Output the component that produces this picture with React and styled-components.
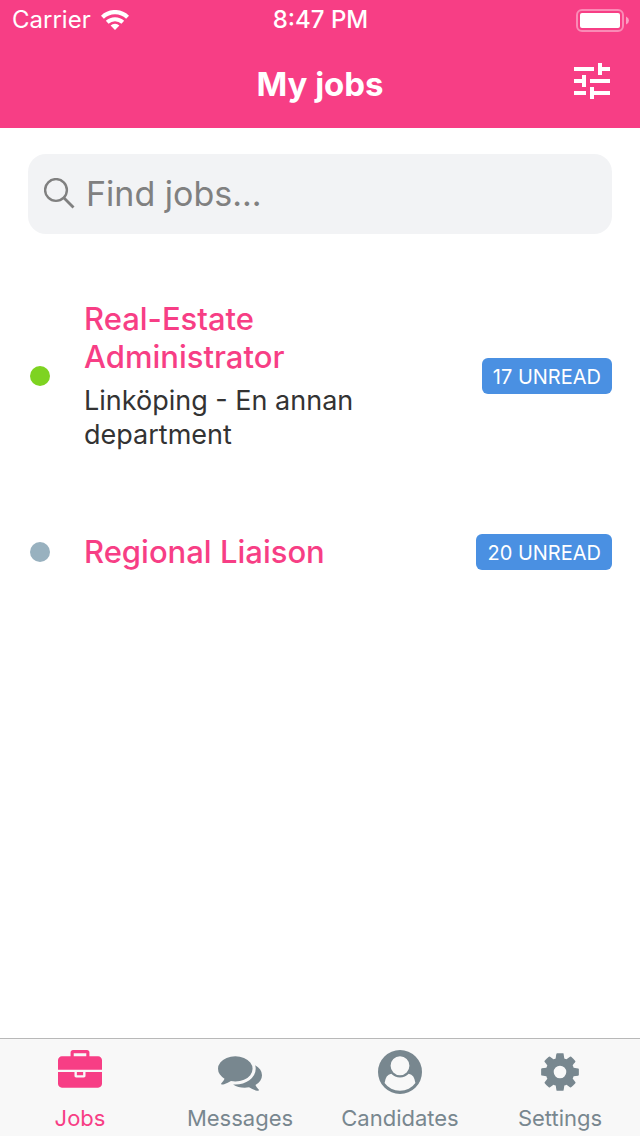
import React from 'react';
import styled, { createGlobalStyle } from 'styled-components';
import { MdTune } from 'react-icons/md';

const pink = '#f73e85';
const slate = '#78878f';

const GlobalStyle = createGlobalStyle`
  * { box-sizing: border-box; }
  body {
    margin: 0;
    background: #fff;
    font-family: Inter, "Liberation Sans", sans-serif;
  }
`;

const Screen = styled.div`
  display: flex;
  flex-direction: column;
  min-height: 100vh;
`;

const Header = styled.header`
  background: ${pink};
  color: #fff;
`;

const StatusBar = styled.div`
  display: grid;
  grid-template-columns: 1fr auto 1fr;
  align-items: center;
  height: 40px;
  padding: 0 11px 0 12px;
  font-size: 24px;
  line-height: 28px;
`;

const Carrier = styled.div`
  display: flex;
  align-items: center;
  gap: 10px;
`;

const Clock = styled.time`
  font-weight: 500;
`;

const Battery = styled.svg`
  justify-self: end;
`;

const NavBar = styled.div`
  display: grid;
  grid-template-columns: 1fr auto 1fr;
  align-items: center;
  height: 88px;
  padding: 0 24px;
`;

const Title = styled.h1`
  grid-column: 2;
  margin: 0;
  font-size: 33px;
  line-height: 40px;
  font-weight: 700;
`;

const FilterButton = styled.button`
  display: flex;
  justify-self: end;
  margin: 0 0 6px;
  padding: 0;
  border: 0;
  background: none;
  color: inherit;
  font-size: 48px;
`;

const Content = styled.main`
  flex: 1;
  padding: 26px 28px;
`;

const SearchField = styled.label`
  display: flex;
  align-items: center;
  gap: 11px;
  height: 80px;
  padding: 0 16px;
  border-radius: 18px;
  background: #f2f3f5;
  color: #808080;
`;

const SearchInput = styled.input`
  flex: 1;
  min-width: 0;
  padding: 0;
  border: 0;
  outline: 0;
  background: none;
  color: #333;
  font-family: inherit;
  font-size: 34px;
  line-height: 44px;

  &::placeholder {
    color: #808080;
    opacity: 1;
  }
`;

const JobList = styled.ul`
  display: flex;
  flex-direction: column;
  gap: 1px;
  margin: 26px 0 0;
  padding: 0;
  list-style: none;
`;

const JobRow = styled.li`
  display: flex;
  align-items: center;
  padding: 40px 0;
`;

const StatusDot = styled.span`
  flex: none;
  width: 20px;
  height: 20px;
  margin: 0 34px 0 2px;
  border-radius: 50%;
  background: ${(p) => (p.$active ? '#7ed321' : '#98b1bf')};
`;

const JobText = styled.div`
  flex: 1;
  max-width: 300px;
`;

const JobTitle = styled.a`
  display: block;
  color: ${pink};
  font-size: 31px;
  line-height: 38px;
  font-weight: 500;
  text-decoration: none;
`;

const JobPlace = styled.p`
  margin: 8px 0 0;
  color: #333;
  font-size: 27px;
  line-height: 34px;
`;

const Badge = styled.span`
  margin-left: auto;
  padding: 1px 11px 0;
  height: 36px;
  border-radius: 6px;
  background: #4a90e2;
  color: #fff;
  font-size: 20px;
  line-height: 36px;
  white-space: nowrap;
`;

const TabBar = styled.nav`
  position: sticky;
  bottom: 0;
  display: grid;
  grid-template-columns: repeat(4, 1fr);
  height: 98px;
  border-top: 1px solid #b8b8b8;
  background: #f8f8f8;
`;

const Tab = styled.a`
  display: flex;
  flex-direction: column;
  align-items: center;
  gap: 10px;
  padding-top: 11px;
  color: ${(p) => (p.$active ? pink : slate)};
  font-size: 22px;
  line-height: 28px;
  text-decoration: none;
`;

const icons = {
  briefcase:
    'M640 256h512v-128h-512v128zm1152 640v480q0 66-47 113t-113 47h-1472q-66 0-113-47t-47-113v-480h672v160q0 26 19 45t45 19h320q26 0 45-19t19-45v-160h672zm-768 0v128h-256v-128h256zm768-480v384h-1792v-384q0-66 47-113t113-47h352v-160q0-40 28-68t68-28h576q40 0 68 28t28 68v160h352q66 0 113 47t47 113z',
  comments:
    'M1408 768q0 139-94 257t-256.5 186.5-353.5 68.5q-86 0-176-16-124 88-278 128-36 9-86 16h-3q-11 0-20.5-8t-11.5-21q-1-3-1-6.5t.5-6.5 2-6l2.5-5 3.5-5.5 4-5 4.5-5 4-4.5q5-6 23-25t26-29.5 22.5-29 25-38.5 20.5-44q-124-72-195-177t-71-224q0-139 94-257t256.5-186.5 353.5-68.5 353.5 68.5 256.5 186.5 94 257zm384 256q0 120-71 224.5t-195 176.5q10 24 20.5 44t25 38.5 22.5 29 26 29.5 23 25q1 1 4 4.5t4.5 5 4 5 3.5 5.5l2.5 5 2 6 .5 6.5-1 6.5q-3 14-13 22t-22 7q-50-7-86-16-154-40-278-128-90 16-176 16-271 0-472-132 58 4 88 4 161 0 309-45t264-129q125-92 192-212t67-254q0-77-23-152 129 71 204 178t75 230z',
  user:
    'M1523 1339q-22-155-87.5-257.5t-184.5-118.5q-67 74-159.5 115.5t-195.5 41.5-195.5-41.5-159.5-115.5q-119 16-184.5 118.5t-87.5 257.5q106 150 271 237.5t356 87.5 356-87.5 271-237.5zM1280 640a384 384 0 1 0-768 0a384 384 0 1 0 768 0zM1792 896a896 896 0 1 1-1792 0a896 896 0 1 1 1792 0z',
  cog:
    'M1152 896q0-106-75-181t-181-75-181 75-75 181 75 181 181 75 181-75 75-181zm512-109v222q0 12-8 23t-20 13l-185 28q-19 54-39 91 35 50 107 138 10 12 10 25t-9 23q-27 37-99 108t-94 71q-12 0-26-9l-138-108q-44 23-91 38-16 136-29 186-7 28-36 28h-222q-14 0-24.5-8.5t-11.5-21.5l-28-184q-49-16-90-37l-141 107q-10 9-25 9-14 0-25-11-126-114-165-168-7-10-7-23 0-12 8-23 15-21 51-66.5t54-70.5q-27-50-41-99l-183-27q-13-2-21-12.5t-8-23.5v-222q0-12 8-23t19-13l186-28q14-46 39-92-40-57-107-138-10-12-10-24 0-10 9-23 26-36 98.5-107.5t94.5-71.5q13 0 26 10l138 107q44-23 91-38 16-136 29-186 7-28 36-28h222q14 0 24.5 8.5t11.5 21.5l28 184q49 16 90 37l142-107q9-9 24-9 13 0 25 10 129 119 165 170 7 8 7 22 0 12-8 23-15 21-51 66.5t-54 70.5q26 50 41 98l183 28q13 2 21 12.5t8 23.5z',
};

const TabIcon = ({ name }) => (
  <svg width="44" height="44" viewBox="0 0 1792 1792" fill="currentColor" fillRule="evenodd" aria-hidden="true">
    <path d={icons[name]} />
  </svg>
);

const WifiIcon = () => (
  <svg width="28" height="20" viewBox="0 0 28 20" fill="none" stroke="#fff" aria-hidden="true">
    <path d="M1.4 7.2a18 18 0 0 1 25.2 0" strokeWidth="4.2" />
    <path d="M6.200 12.300a11.400 11.400 0 0 1 15.600 0" strokeWidth="4" />
    <path d="M14 20l-4.400-4.400a6.200 6.200 0 0 1 8.800 0z" fill="#fff" stroke="none" />
  </svg>
);

const BatteryIcon = () => (
  <Battery width="53" height="24" viewBox="0 0 53 24" aria-label="Battery full" role="img">
    <rect x="1" y="2" width="46" height="21" rx="5" fill="none" stroke="#fff" strokeOpacity=".4" strokeWidth="2" />
    <rect x="4" y="5" width="40" height="15" rx="2" fill="#fff" />
    <path d="M50 8.500q3 1.500 3 4t-3 4z" fill="#fff" fillOpacity=".5" />
  </Battery>
);

const SearchIcon = () => (
  <svg width="31" height="32" viewBox="0 0 31 32" fill="none" stroke="currentColor" strokeWidth="2.4" aria-hidden="true">
    <circle cx="12" cy="12" r="10.900" />
    <path d="M19.800 19.800L29.500 29.500" strokeWidth="2.800" />
  </svg>
);

const jobs = [
  { title: 'Real-Estate Administrator', place: 'Linköping - En annan department', unread: 17, active: true },
  { title: 'Regional Liaison', unread: 20, active: false },
];

const tabs = [
  { label: 'Jobs', icon: 'briefcase', active: true },
  { label: 'Messages', icon: 'comments' },
  { label: 'Candidates', icon: 'user' },
  { label: 'Settings', icon: 'cog' },
];

export default function App() {
  return (
    <Screen>
      <GlobalStyle />
      <Header>
        <StatusBar>
          <Carrier>
            Carrier
            <WifiIcon />
          </Carrier>
          <Clock>8:47 PM</Clock>
          <BatteryIcon />
        </StatusBar>
        <NavBar>
          <Title>My jobs</Title>
          <FilterButton type="button" aria-label="Filter jobs">
            <MdTune />
          </FilterButton>
        </NavBar>
      </Header>
      <Content>
        <SearchField>
          <SearchIcon />
          <SearchInput type="text" placeholder="Find jobs..." aria-label="Find jobs" />
        </SearchField>
        <JobList>
          {jobs.map((job) => (
            <JobRow key={job.title}>
              <StatusDot $active={job.active} />
              <JobText>
                <JobTitle href="#job">{job.title}</JobTitle>
                {job.place && <JobPlace>{job.place}</JobPlace>}
              </JobText>
              <Badge>{job.unread} UNREAD</Badge>
            </JobRow>
          ))}
        </JobList>
      </Content>
      <TabBar>
        {tabs.map((tab) => (
          <Tab key={tab.label} href="#tab" $active={tab.active}>
            <TabIcon name={tab.icon} />
            {tab.label}
          </Tab>
        ))}
      </TabBar>
    </Screen>
  );
}
